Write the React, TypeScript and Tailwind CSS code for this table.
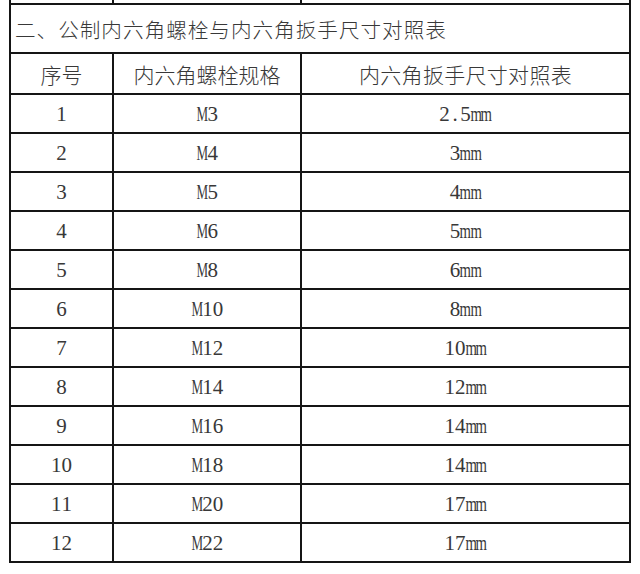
import React from "react";

const rows: [string, string, string][] = [
  ["1", "M3", "2.5mm"],
  ["2", "M4", "3mm"],
  ["3", "M5", "4mm"],
  ["4", "M6", "5mm"],
  ["5", "M8", "6mm"],
  ["6", "M10", "8mm"],
  ["7", "M12", "10mm"],
  ["8", "M14", "12mm"],
  ["9", "M16", "14mm"],
  ["10", "M18", "14mm"],
  ["11", "M20", "17mm"],
  ["12", "M22", "17mm"],
];

const cjk = { fontFamily: '"Noto Sans CJK SC", "Noto Sans", sans-serif' };
const serif = { fontFamily: '"Liberation Serif", "Noto Sans CJK SC", serif' };

function Mono({ text }: { text: string }) {
  return (
    <span className="inline-flex" style={serif}>
      {text.split("").map((c, i) => {
        const narrow = c === "M" ? "scale-x-[0.62]" : c === "m" ? "scale-x-[0.7]" : "";
        return (
          <span key={i} className="inline-flex w-[0.5em] justify-center">
            <span className={`inline-block shrink-0 ${narrow}`}>{c}</span>
          </span>
        );
      })}
    </span>
  );
}

export default function App() {
  return (
    <div className="w-[640px] h-[574px] bg-white overflow-hidden">
      <div className="ml-[9px] w-[622px] border-x-2 border-[#151515] text-[#383838]">
        {/* stub of previous table row */}
        <div className="grid grid-cols-[103px_188px_1fr] h-[3px]">
          <div className="border-r-2 border-[#151515]" />
          <div className="border-r-2 border-[#151515]" />
          <div />
        </div>
        {/* title row */}
        <div
          className="h-[51px] border-y-2 border-[#151515] flex items-center pl-[4px] pt-[2px] text-[20.6px] tracking-[1px] font-light"
          style={cjk}
        >
          二、公制内六角螺栓与内六角扳手尺寸对照表
        </div>
        {/* header row */}
        <div className="grid grid-cols-[103px_188px_1fr] h-[41px] border-b-2 border-[#151515] text-[21px] font-light" style={cjk}>
          <div className="border-r-2 border-[#151515] flex items-center justify-center pt-[3px]">序号</div>
          <div className="border-r-2 border-[#151515] flex items-center justify-center pt-[3px]">内六角螺栓规格</div>
          <div className="flex items-center justify-center pt-[3px] tracking-[0.3px]">内六角扳手尺寸对照表</div>
        </div>
        {rows.map(([n, m, s]) => (
          <div key={n} className="grid grid-cols-[103px_188px_1fr] h-[39px] border-b-2 border-[#151515] text-[21px]">
            <div className="border-r-2 border-[#151515] flex items-center justify-center pt-[3px]">
              <Mono text={n} />
            </div>
            <div className="border-r-2 border-[#151515] flex items-center justify-center pt-[3px] pl-[1px]">
              <Mono text={m} />
            </div>
            <div className="flex items-center justify-center pt-[3px]">
              <Mono text={s} />
            </div>
          </div>
        ))}
      </div>
    </div>
  );
}
